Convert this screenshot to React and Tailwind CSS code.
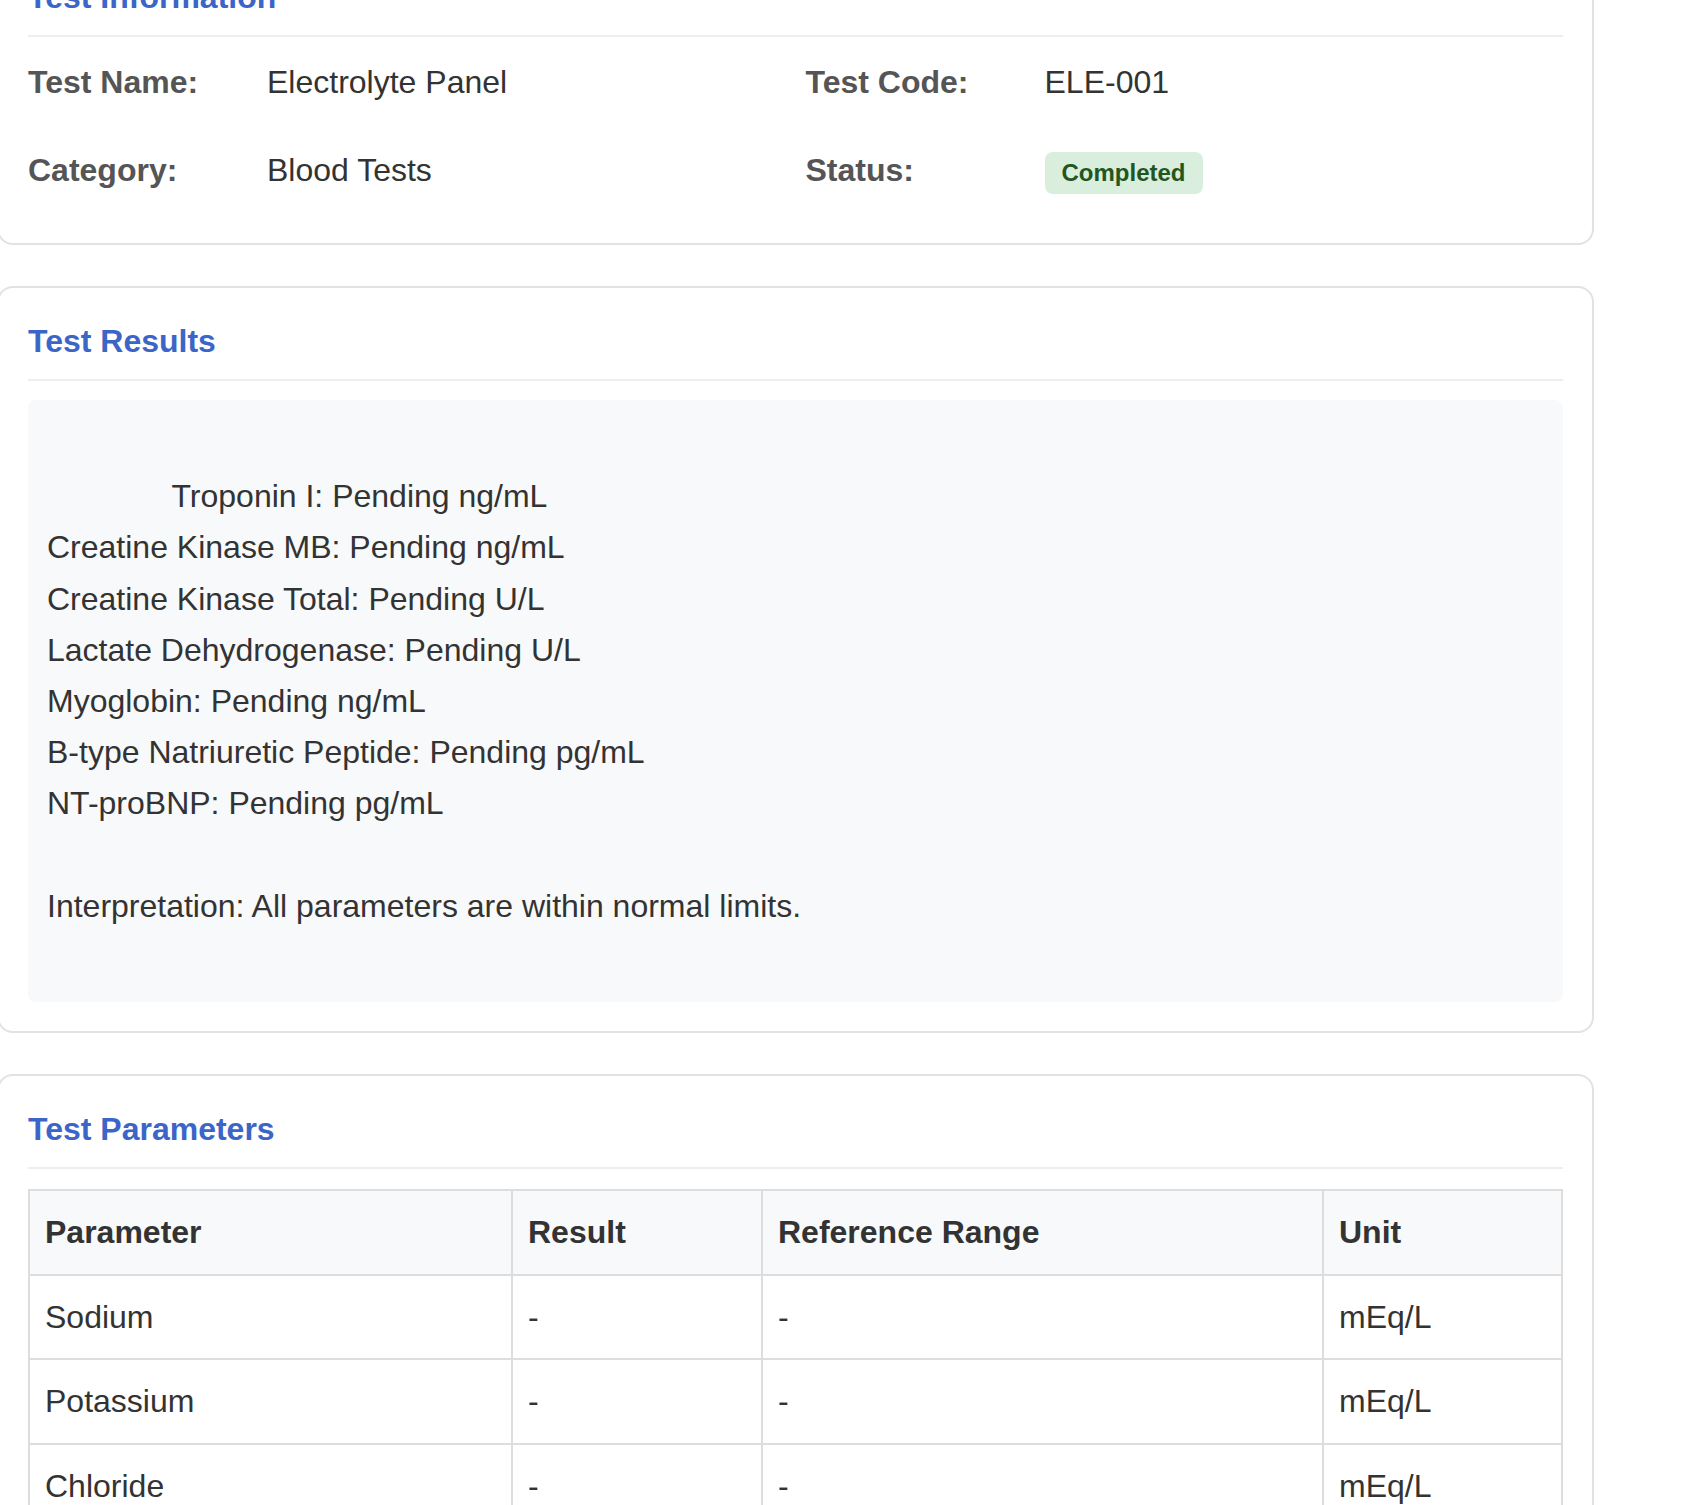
import React from "react";

const resultsText =
  "\n              Troponin I: Pending ng/mL\nCreatine Kinase MB: Pending ng/mL\nCreatine Kinase Total: Pending U/L\nLactate Dehydrogenase: Pending U/L\nMyoglobin: Pending ng/mL\nB-type Natriuretic Peptide: Pending pg/mL\nNT-proBNP: Pending pg/mL\n\nInterpretation: All parameters are within normal limits.";

const params = [
  { name: "Sodium", result: "-", range: "-", unit: "mEq/L" },
  { name: "Potassium", result: "-", range: "-", unit: "mEq/L" },
  { name: "Chloride", result: "-", range: "-", unit: "mEq/L" },
  { name: "Bicarbonate", result: "-", range: "-", unit: "mEq/L" },
];

function Card({ title, children }) {
  return (
    <div className="bg-white border-2 border-[#e2e2e2] rounded-[16px] p-[29px] mb-[41px]">
      <h3 className="text-[32px] leading-[48px] font-bold text-[#3b66c8] pb-[14px] border-b-2 border-[#eeeeee]">
        {title}
      </h3>
      {children}
    </div>
  );
}

function InfoItem({ label, children }) {
  return (
    <div className="flex items-center py-[20px] leading-[48px]">
      <span className="w-[239px] shrink-0 font-bold text-[#555555]">{label}</span>
      <span className="text-[#333333]">{children}</span>
    </div>
  );
}

// table cell style, shared by head and body
const cell = "border-2 border-[#dddddd] px-[15px] py-[23px] leading-[1.15] text-left";

export default function App() {
  return (
    <div
      className="min-h-screen bg-white text-[32px] text-[#333333]"
      style={{ fontFamily: '"Liberation Sans", Arial, sans-serif' }}
    >
      <div className="w-[1597px] -ml-[3px] -mt-[58px]">
        {/* Test Information */}
        <Card title="Test Information">
          <div className="grid grid-cols-2 gap-x-[20px] mt-[1px]">
            <InfoItem label="Test Name:">Electrolyte Panel</InfoItem>
            <InfoItem label="Test Code:">ELE-001</InfoItem>
            <InfoItem label="Category:">Blood Tests</InfoItem>
            <InfoItem label="Status:">
              <span className="inline-block mt-[3px] bg-[#d9eedc] text-[#22561f] font-bold text-[24px] leading-[24px] px-[17px] py-[9px] rounded-[8px]">
                Completed
              </span>
            </InfoItem>
          </div>
        </Card>

        {/* Test Results */}
        <Card title="Test Results">
          <div className="mt-[19px] bg-[#f8f9fa] rounded-[8px] pl-[19px] pr-[20px] pt-[20px] pb-[70px] whitespace-pre-wrap leading-[1.6] text-[#333333]">
            {resultsText}
          </div>
        </Card>

        {/* Test Parameters */}
        <Card title="Test Parameters">
          <table className="mt-[20px] w-full table-fixed border-collapse border-2 border-[#dddddd]">
            <thead>
              <tr className="bg-[#f8f9fa]">
                <th className={`w-[483px] font-bold text-[#333333] ${cell}`}>Parameter</th>
                <th className={`w-[250px] font-bold text-[#333333] ${cell}`}>Result</th>
                <th className={`w-[561px] font-bold text-[#333333] ${cell}`}>Reference Range</th>
                <th className={`font-bold text-[#333333] ${cell}`}>Unit</th>
              </tr>
            </thead>
            <tbody>
              {params.map((p) => (
                <tr key={p.name}>
                  <td className={cell}>{p.name}</td>
                  <td className={cell}>{p.result}</td>
                  <td className={cell}>{p.range}</td>
                  <td className={cell}>{p.unit}</td>
                </tr>
              ))}
            </tbody>
          </table>
        </Card>
      </div>
    </div>
  );
}
